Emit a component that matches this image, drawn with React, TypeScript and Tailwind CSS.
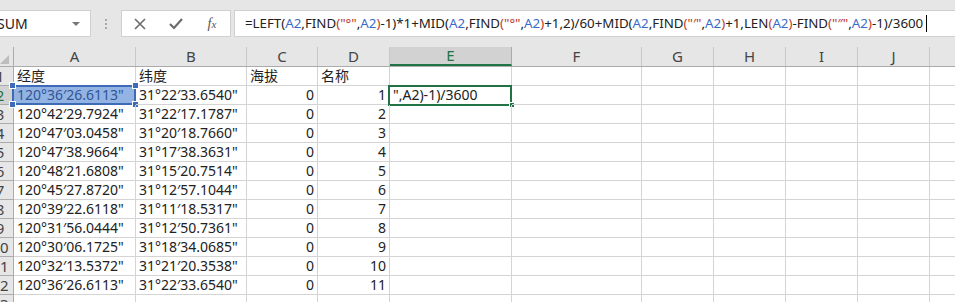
import React from "react";

const font = { fontFamily: '"Noto Sans", "Noto Sans CJK SC", sans-serif' };

type Col = { key: string; w: number };

const cols: Col[] = [
  { key: "A", w: 122 },
  { key: "B", w: 111 },
  { key: "C", w: 71 },
  { key: "D", w: 72 },
  { key: "E", w: 122 },
  { key: "F", w: 130 },
  { key: "G", w: 72 },
  { key: "H", w: 72 },
  { key: "I", w: 72 },
  { key: "J", w: 72 },
  { key: "K", w: 72 },
];

const data: [string, string, string, string][] = [
  ["经度", "纬度", "海拔", "名称"],
  ["120°36′26.6113\"", "31°22′33.6540\"", "0", "1"],
  ["120°42′29.7924\"", "31°22′17.1787\"", "0", "2"],
  ["120°47′03.0458\"", "31°20′18.7660\"", "0", "3"],
  ["120°47′38.9664\"", "31°17′38.3631\"", "0", "4"],
  ["120°48′21.6808\"", "31°15′20.7514\"", "0", "5"],
  ["120°45′27.8720\"", "31°12′57.1044\"", "0", "6"],
  ["120°39′22.6118\"", "31°11′18.5317\"", "0", "7"],
  ["120°31′56.0444\"", "31°12′50.7361\"", "0", "8"],
  ["120°30′06.1725\"", "31°18′34.0685\"", "0", "9"],
  ["120°32′13.5372\"", "31°21′20.3538\"", "0", "10"],
  ["120°36′26.6113\"", "31°22′33.6540\"", "0", "11"],
  ["", "", "", ""],
];

// formula pieces: [text, colour]
const K = "text-[#222]";
const R = "text-[#c0392b]";
const B = "text-[#3b6bc9]";
const formula: [string, string][] = [
  ["=LEFT(", K], ["A2", B], [",FIND", K], ["(\"°\"", R], [",", K], ["A2", B], [")", R],
  ["-1)*1+MID(", K], ["A2", B], [",FIND", K], ["(\"°\"", R], [",", K], ["A2", B], [")", R],
  ["+1,2)/60+MID(", K], ["A2", B], [",FIND", K], ["(\"′\"", R], [",", K], ["A2", B], [")", R],
  ["+1,LEN", K], ["(", R], ["A2", B], [")", R], ["-FIND", K], ["(\"″\"", R], [",", K], ["A2", B], [")", R],
  ["-1)/3600", K],
];

function Handle({ className }: { className: string }) {
  return <span className={`absolute h-[5px] w-[5px] bg-[#3d6bb8] ring-1 ring-white ${className}`} />;
}

export default function App() {
  return (
    <div className="h-[302px] w-[955px] overflow-hidden bg-white text-[#222]" style={font}>
      {/* formula bar */}
      <div className="flex h-[47px] items-start bg-[#e6e6e6] pt-[10px]">
        <div className="relative flex h-[27px] w-[91px] items-center overflow-hidden border border-l-0 border-[#d0d0d0] bg-white">
          <span className="-ml-[3px] text-[14px]">SUM</span>
          <span className="absolute right-[10px] top-[11px] h-0 w-0 border-x-[4px] border-t-[4px] border-x-transparent border-t-[#777]" />
        </div>
        <div className="flex h-[27px] w-[30px] flex-col items-center justify-center gap-[2px]">
          <span className="h-[2px] w-[2px] bg-[#a8a8a8]" />
          <span className="h-[2px] w-[2px] bg-[#a8a8a8]" />
          <span className="h-[2px] w-[2px] bg-[#a8a8a8]" />
        </div>
        <div className="flex h-[27px] w-[110px] items-center border border-[#d0d0d0] bg-white">
          <div className="flex w-[36px] justify-center">
            <svg width="12" height="12" viewBox="0 0 12 12">
              <path d="M1 1 L11 11 M11 1 L1 11" stroke="#6b6b6b" strokeWidth="1.6" />
            </svg>
          </div>
          <div className="flex w-[36px] justify-center">
            <svg width="14" height="12" viewBox="0 0 14 12">
              <path d="M1 6 L5 10 L13 1" stroke="#6b6b6b" strokeWidth="2.2" fill="none" />
            </svg>
          </div>
          <div className="flex w-[36px] justify-center">
            <span className="text-[14px] italic text-[#555]" style={{ fontFamily: '"Liberation Serif", serif' }}>
              f<span className="text-[11px]">x</span>
            </span>
          </div>
        </div>
        <div className="ml-[3px] flex h-[27px] flex-1 items-center border border-r-0 border-[#d0d0d0] bg-white pl-[10px]">
          <span className="whitespace-nowrap text-[13.3px]">
            {formula.map(([t, c], i) => (
              <span key={i} className={c}>{t}</span>
            ))}
          </span>
          <span className="ml-[3px] h-[17px] w-px bg-black" />
        </div>
      </div>

      {/* column headers */}
      <div className="flex h-[20px] border-b border-[#ababab] bg-[#e6e6e6] text-[15px] text-[#444]">
        <div className="relative w-[14px] shrink-0 border-r border-[#ababab]">
          <span className="absolute bottom-[2px] left-0 h-0 w-0 border-b-[9px] border-l-[9px] border-b-[#bdbdbd] border-l-transparent" />
        </div>
        {cols.map((c) => (
          <div
            key={c.key}
            style={{ width: c.w }}
            className={
              c.key === "E"
                ? "flex shrink-0 items-center justify-center border-b-2 border-r border-b-[#217346] border-r-[#ababab] bg-[#d2d2d2] text-[#217346] leading-none"
                : "flex shrink-0 items-center justify-center border-r border-[#c8c8c8] leading-none"
            }
          >
            {c.key}
          </div>
        ))}
      </div>

      {/* rows */}
      {data.map((row, r) => {
        const n = r + 1;
        return (
          <div key={n} className="flex h-[19px] text-[14px]">
            <div
              className={`w-[14px] shrink-0 overflow-hidden border-b border-r border-[#ababab] ${
                n === 2 ? "bg-[#d2d2d2] text-[#217346]" : "bg-[#e6e6e6] text-[#444]"
              }`}
            >
              <div className="-ml-[13px] w-[26px] text-center text-[15px] leading-[18px]">{n}</div>
            </div>
            {cols.map((c, ci) => {
              const v = ci < 4 ? row[ci] : "";
              const right = r > 0 && (ci === 2 || ci === 3);
              const isA2 = n === 2 && c.key === "A";
              const isE2 = n === 2 && c.key === "E";
              return (
                <div
                  key={c.key}
                  style={{ width: c.w }}
                  className={`relative shrink-0 border-b border-r border-[#d4d4d4] px-[3px] leading-[18px] whitespace-nowrap ${
                    right ? "text-right" : "text-left"
                  } ${isA2 ? "bg-[#93b3e3] text-[#2f5597]" : ""}`}
                >
                  {v}
                  {isA2 && (
                    <>
                      <span className="absolute -left-[2px] -top-[1px] h-[20px] w-[124px] border-2 border-[#3d6bb8]" />
                      <Handle className="-left-[4px] -top-[3px]" />
                      <Handle className="-right-[3px] -top-[3px]" />
                      <Handle className="-left-[4px] -bottom-[3px]" />
                      <Handle className="-right-[3px] -bottom-[3px]" />
                    </>
                  )}
                  {isE2 && (
                    <>
                      <span className="absolute -left-[2px] -top-[1px] h-[21px] w-[124px] border-2 border-[#217346]" />
                      <span className="absolute -bottom-[4px] -right-[4px] h-[6px] w-[6px] border border-white bg-[#217346]" />
                      <span className="relative">",A2)-1)/3600</span>
                    </>
                  )}
                </div>
              );
            })}
          </div>
        );
      })}
    </div>
  );
}
